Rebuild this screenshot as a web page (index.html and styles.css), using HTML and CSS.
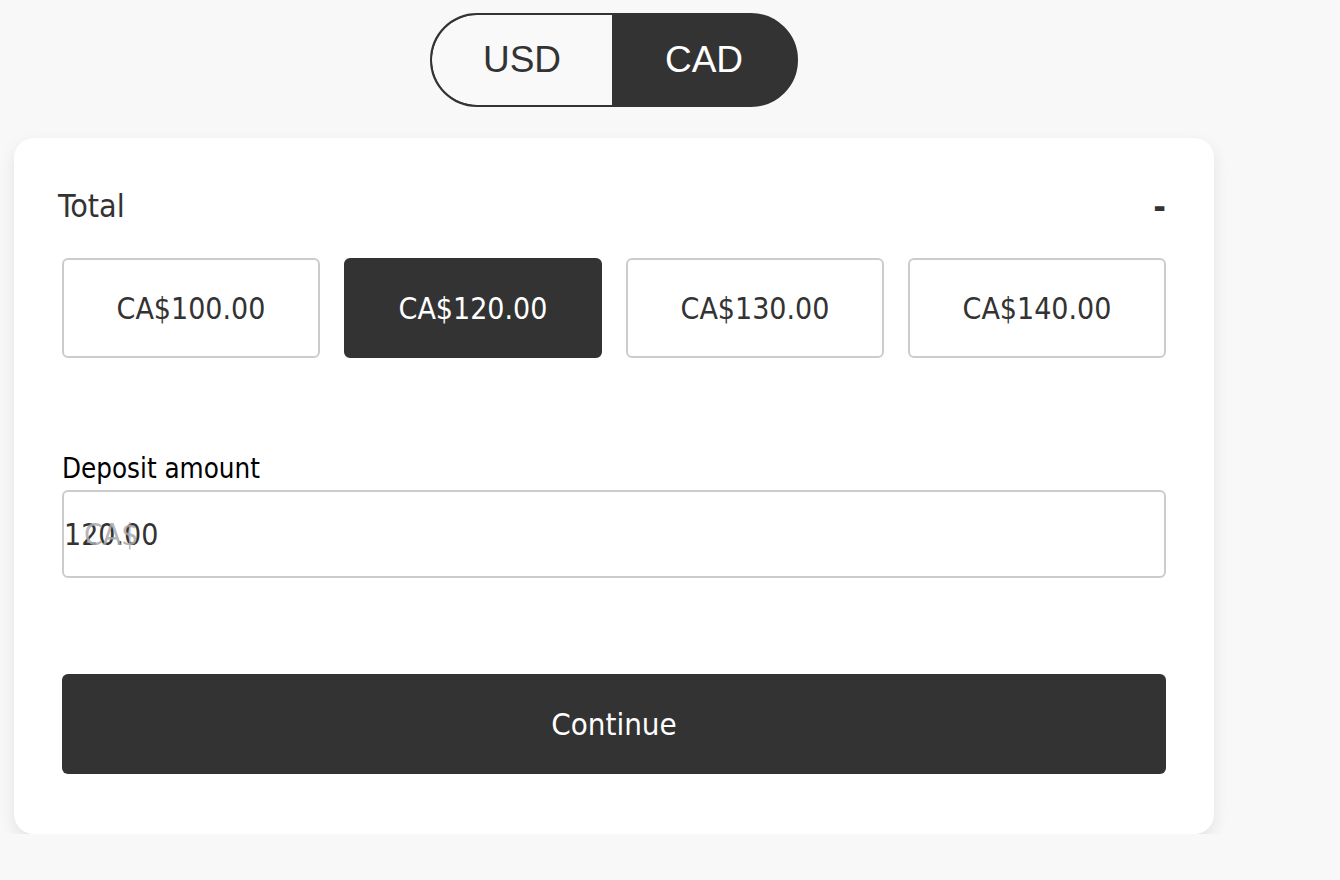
FILE: index.html
```html
<!DOCTYPE html>
<html lang="en">
<head>
<meta charset="utf-8">
<title>Deposit</title>
<link rel="stylesheet" href="styles.css">
</head>
<body>
<div class="page">
  <div class="toggle">
    <button class="toggle-btn usd">USD</button>
    <button class="toggle-btn cad active">CAD</button>
  </div>
  <div class="card">
    <div class="total-row">
      <span class="total-label">Total</span>
      <span class="total-value">-</span>
    </div>
    <div class="amounts">
      <button class="amount">CA$100.00</button>
      <button class="amount selected">CA$120.00</button>
      <button class="amount">CA$130.00</button>
      <button class="amount">CA$140.00</button>
    </div>
    <label class="field-label">Deposit amount</label>
    <div class="input-wrap">
      <div class="input">120.00</div>
      <span class="prefix">CA$</span>
    </div>
    <button class="continue">Continue</button>
  </div>
</div>
</body>
</html>
```
FILE: styles.css
```css
html, body {
  margin: 0;
  padding: 0;
  background: #f8f8f8;
}
body {
  font-family: "DejaVu Sans Condensed", "DejaVu Sans", sans-serif;
  color: #333;
}
.page {
  width: 1200px;
  margin-left: 14px;
  padding-top: 13px;
  display: flex;
  flex-direction: column;
  align-items: center;
}
.toggle {
  display: flex;
  border: 2px solid #333;
  border-radius: 50px;
  overflow: hidden;
  height: 90px;
  background: #333;
}
.toggle-btn {
  border: 0;
  margin: 0;
  padding: 0;
  font-family: "Liberation Sans", Arial, sans-serif;
  font-size: 37px;
  display: flex;
  align-items: center;
  justify-content: center;
}
.toggle-btn.usd {
  width: 180px;
  background: #f9f9f9;
  color: #333;
  border-radius: 48px 0 0 48px;
}
.toggle-btn.cad {
  width: 184px;
  background: #333;
  color: #fff;
}
.card {
  align-self: stretch;
  margin-top: 31px;
  background: #fff;
  border-radius: 20px;
  box-shadow: 0 6px 16px rgba(0, 0, 0, 0.09);
  padding: 48px 48px 60px;
  display: flex;
  flex-direction: column;
}
.total-row {
  display: flex;
  justify-content: space-between;
  align-items: center;
  height: 40px;
}
.total-label {
  font-size: 32px;
  color: #333;
  margin-left: -4px;
}
.total-value {
  font-size: 34px;
  font-weight: bold;
  color: #333;
}
.amounts {
  margin-top: 32px;
  display: grid;
  grid-template-columns: repeat(4, 1fr);
  gap: 24px;
}
.amount {
  height: 100px;
  border: 2px solid #ccc;
  border-radius: 6px;
  background: #fff;
  color: #333;
  font-family: inherit;
  font-size: 30px;
  padding: 0;
}
.amount.selected {
  background: #333;
  border-color: #333;
  color: #fff;
}
.field-label {
  margin-top: 94px;
  height: 32px;
  line-height: 32px;
  font-size: 27.5px;
  color: #000;
  margin-bottom: 6px;
}
.input-wrap {
  position: relative;
}
.input {
  height: 84px;
  border: 2px solid #ccc;
  border-radius: 6px;
  display: flex;
  align-items: center;
  padding-left: 0;
  font-size: 30px;
  color: #333;
}
.prefix {
  position: absolute;
  left: 22px;
  top: 0;
  height: 88px;
  display: flex;
  align-items: center;
  font-size: 30px;
  color: #aaa;
  opacity: 0.85;
}
.continue {
  margin-top: 96px;
  height: 100px;
  border: 0;
  border-radius: 6px;
  background: #333;
  color: #fff;
  font-family: inherit;
  font-size: 31px;
}
```
